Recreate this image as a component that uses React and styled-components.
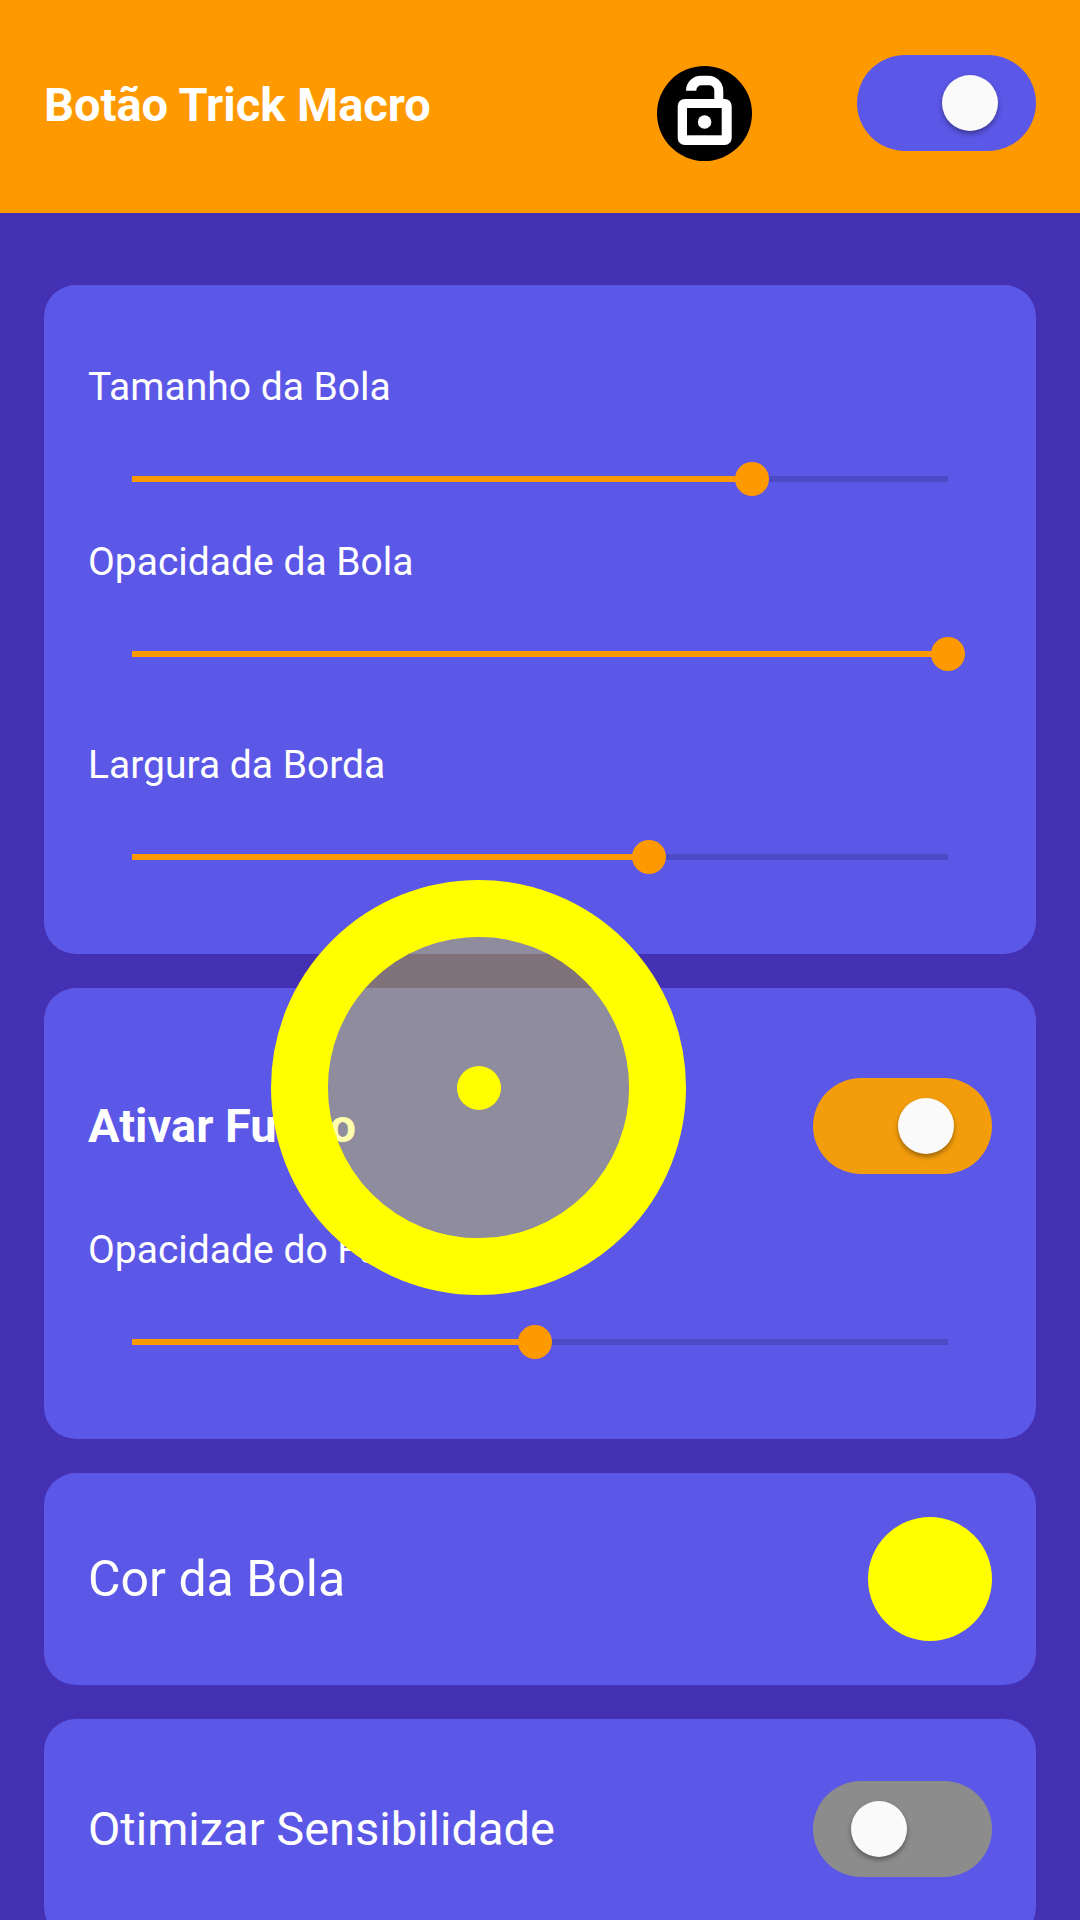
import React, { useState } from 'react';
import styled, { createGlobalStyle, ThemeProvider } from 'styled-components';

const theme = {
  bg: '#4430b3',
  card: '#5b57e7',
  brand: '#ff9900',
  accent: '#f39d0c',
  off: '#8c8c8c',
  ball: '#ffff00',
};

const GlobalStyle = createGlobalStyle`
  *, *::before, *::after {
    box-sizing: border-box;
  }
  body {
    margin: 0;
    background: #4430b3;
    color: #ffffff;
    font-family: Roboto, 'Liberation Sans', sans-serif;
  }
`;

const Screen = styled.div`
  position: relative;
  height: 100vh;
  overflow-x: hidden;
  overflow-y: auto;
  background: ${({ theme }) => theme.bg};
  scrollbar-width: none;
`;

const Header = styled.header`
  display: flex;
  align-items: flex-start;
  padding: 55px 44px 52px;
  background: ${({ theme }) => theme.brand};
`;

const AppTitle = styled.h1`
  flex: 1;
  margin: 0;
  font-size: 47px;
  line-height: 100px;
  font-weight: 700;
`;

const LockButton = styled.button`
  width: 95px;
  height: 95px;
  margin: 11px 105px 0 0;
  padding: 0;
  border: 0;
  border-radius: 50%;
  background: #000000;
  cursor: pointer;
`;

const LockSvg = styled.svg`
  display: block;
  width: 100%;
  height: 100%;
`;

const Main = styled.main`
  display: flex;
  flex-direction: column;
  gap: 34px;
  padding: 72px 44px 34px;
`;

const Card = styled.section`
  padding: 77px 44px 80px;
  border-radius: 32px;
  background: ${({ theme }) => theme.card};
`;

const BackgroundCard = styled(Card)`
  padding-top: 90px;
`;

const ColorCard = styled(Card)`
  padding: 44px;
`;

const SwitchCard = styled(Card)`
  padding: 62px 44px;
`;

const Row = styled.div`
  display: flex;
  align-items: center;
  justify-content: space-between;
`;

const RowLabel = styled.label`
  font-size: ${({ $size }) => $size || 47}px;
  line-height: 56px;
  font-weight: ${({ $bold }) => ($bold ? 700 : 400)};
`;

const Toggle = styled.input.attrs({ type: 'checkbox', role: 'switch' })`
  appearance: none;
  display: flex;
  flex-shrink: 0;
  align-items: center;
  justify-content: ${({ checked }) => (checked ? 'flex-end' : 'flex-start')};
  width: 179px;
  height: 96px;
  margin: 0;
  padding: 0 38px;
  border-radius: 48px;
  background: ${({ checked, $on, theme }) => (checked ? $on : theme.off)};
  cursor: pointer;

  &::before {
    content: '';
    width: 56px;
    height: 56px;
    border-radius: 50%;
    background: #fafafa;
    box-shadow: 0 3px 5px rgba(0, 0, 0, 0.35);
  }
`;

const Field = styled.div`
  display: flex;
  flex-direction: column;
  margin-top: ${({ $gap }) => $gap || 0}px;
`;

const FieldLabel = styled.label`
  font-size: 39px;
  line-height: 50px;
`;

const Range = styled.input.attrs({ type: 'range' })`
  appearance: none;
  height: 34px;
  margin: 50px 27px 0;
  background: transparent;
  cursor: pointer;

  &::-webkit-slider-runnable-track {
    height: 34px;
    background: linear-gradient(
        to right,
        ${({ theme }) => theme.brand} var(--fill),
        rgba(0, 0, 0, 0.15) var(--fill)
      )
      center / calc(100% - 34px) 6px no-repeat;
  }

  &::-webkit-slider-thumb {
    appearance: none;
    width: 34px;
    height: 34px;
    border: 0;
    border-radius: 50%;
    background: ${({ theme }) => theme.brand};
  }
`;

const Swatch = styled.button`
  width: 124px;
  height: 124px;
  padding: 0;
  border: 0;
  border-radius: 50%;
  background: ${({ theme }) => theme.ball};
  cursor: pointer;
`;

// The macro ball floats over the whole screen
const Ball = styled.div`
  position: absolute;
  top: 880px;
  left: 271px;
  display: flex;
  align-items: center;
  justify-content: center;
  width: 415px;
  height: 415px;
  border: 57px solid ${({ theme }) => theme.ball};
  border-radius: 50%;
  background: rgba(255, 255, 0, 0.32);
  background-clip: padding-box;
  pointer-events: none;
`;

const BallDot = styled.span`
  width: 44px;
  height: 44px;
  border-radius: 50%;
  background: ${({ theme }) => theme.ball};
`;

const LockOpenIcon = () => (
  <LockSvg viewBox="0 0 95 95" aria-hidden="true">
    <path
      fill="#fff"
      d="M29 24.7C29 16 36 9.7 44 9.7H51C59.5 9.7 66.3 16 66.3 24.7V36H57.3V24.7C57.3 21.3 55 19.3 51.5 19.3H44.5C41.5 19.3 39.5 21.3 39.3 24.7Z"
    />
    <rect x="20.7" y="33" width="54" height="46" rx="7" fill="#fff" />
    <rect x="30" y="42" width="34.7" height="27.3" fill="#000" />
    <circle cx="47.6" cy="56" r="6.8" fill="#fff" />
  </LockSvg>
);

const SliderField = ({ id, label, max, initial, gap }) => {
  const [value, setValue] = useState(initial);
  return (
    <Field $gap={gap}>
      <FieldLabel htmlFor={id}>{label}</FieldLabel>
      <Range
        id={id}
        min={0}
        max={max}
        value={value}
        onChange={e => setValue(Number(e.target.value))}
        style={{ '--fill': `${(value / max) * 100}%` }}
      />
    </Field>
  );
};

const App = () => {
  const [enabled, setEnabled] = useState(true);
  const [background, setBackground] = useState(true);
  const [optimize, setOptimize] = useState(false);

  return (
    <ThemeProvider theme={theme}>
      <GlobalStyle />
      <Screen>
        <Header>
          <AppTitle>Botão Trick Macro</AppTitle>
          <LockButton type="button" aria-label="Bloquear posição">
            <LockOpenIcon />
          </LockButton>
          <Toggle
            aria-label="Botão Trick Macro"
            $on={theme.card}
            checked={enabled}
            onChange={() => setEnabled(!enabled)}
          />
        </Header>

        <Main>
          <Card>
            <SliderField
              id="size"
              label="Tamanho da Bola"
              max={100}
              initial={76}
            />
            <SliderField
              id="opacity"
              label="Opacidade da Bola"
              max={255}
              initial={255}
              gap={41}
            />
            <SliderField
              id="border"
              label="Largura da Borda"
              max={30}
              initial={19}
              gap={69}
            />
          </Card>

          <BackgroundCard>
            <Row>
              <RowLabel htmlFor="background" $bold>
                Ativar Fundo
              </RowLabel>
              <Toggle
                id="background"
                $on={theme.accent}
                checked={background}
                onChange={() => setBackground(!background)}
              />
            </Row>
            <SliderField
              id="background-opacity"
              label="Opacidade do Fundo"
              max={255}
              initial={126}
              gap={51}
            />
          </BackgroundCard>

          <ColorCard>
            <Row>
              <RowLabel htmlFor="color" $size={50}>
                Cor da Bola
              </RowLabel>
              <Swatch type="button" id="color" />
            </Row>
          </ColorCard>

          <SwitchCard>
            <Row>
              <RowLabel htmlFor="optimize">Otimizar Sensibilidade</RowLabel>
              <Toggle
                id="optimize"
                $on={theme.accent}
                checked={optimize}
                onChange={() => setOptimize(!optimize)}
              />
            </Row>
          </SwitchCard>
        </Main>

        <Ball>
          <BallDot />
        </Ball>
      </Screen>
    </ThemeProvider>
  );
};

export default App;
